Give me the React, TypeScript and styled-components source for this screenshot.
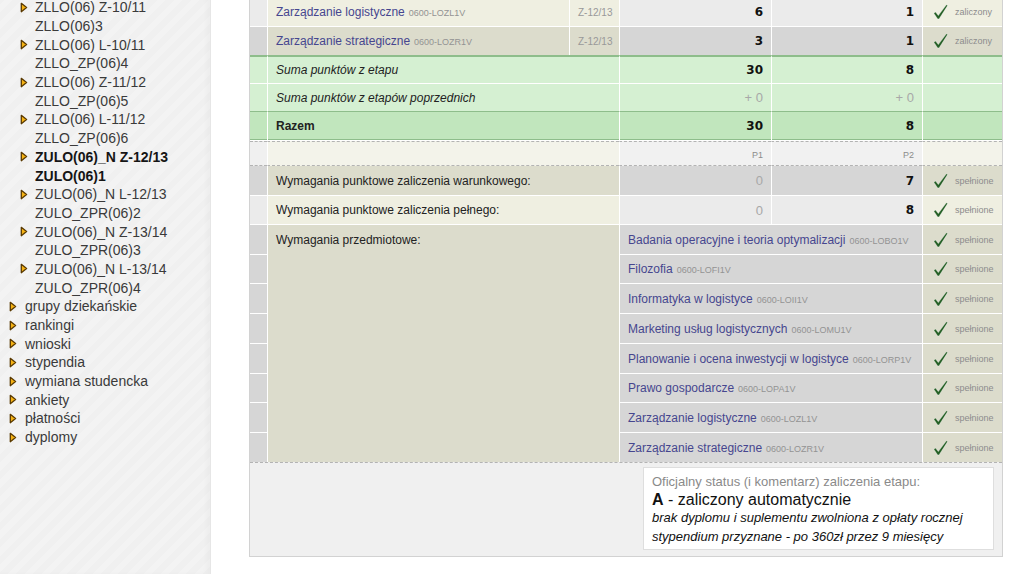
import React from "react"
import styled, { createGlobalStyle } from "styled-components"

const GlobalStyle = createGlobalStyle`
  html, body {
    margin: 0;
    padding: 0;
    background: #fff;
  }
  body {
    font-family: "Liberation Sans", Arial, sans-serif;
    overflow: hidden;
  }
`

const LIGHT = { side: "#ebebeb", name: "#efefe1", num: "#ebebeb", status: "#efefe1" }
const DARK = { side: "#d6d6d6", name: "#dcdccc", num: "#d6d6d6", status: "#dcdccc" }
const GREEN = "#d5f0d2"
const GREEN_DARK = "#c1e6bd"
const GREEN_LINE = "#8ebd8b"
const DASH = "1px dashed #b3b3b3"

const Page = styled.div`
  display: flex;
  height: 578px;
  margin-top: -4px;
`

const Sidebar = styled.nav`
  width: 211px;
  flex: none;
  box-sizing: border-box;
  padding-top: 2px;
  border-right: 1px solid #e6e6e6;
  background: repeating-linear-gradient(135deg, #f0f0f0 0 6px, #f3f3f3 6px 12px);
  box-shadow: inset -4px 0 5px rgba(0, 0, 0, 0.025);
`

const Item = styled.div<{ $nested?: boolean; $bold?: boolean }>`
  display: flex;
  align-items: center;
  height: 18.7px;
  padding-left: ${(p) => (p.$nested ? 20 : 9)}px;
  font-size: 14px;
  color: ${(p) => (p.$bold ? "#151515" : "#3a3a3a")};
  font-weight: ${(p) => (p.$bold ? "bold" : "normal")};
  white-space: nowrap;
`

const ArrowSlot = styled.span<{ $nested?: boolean }>`
  width: ${(p) => (p.$nested ? 15 : 16)}px;
  flex: none;
  display: flex;
  align-items: center;
`

const Main = styled.main`
  flex: 1;
  padding-left: 38px;
`

const Panel = styled.div`
  width: 752px;
  border: 1px solid #d2d2d2;
  background: #f0f0f0;
`

const Table = styled.table`
  width: 752px;
  border-collapse: separate;
  border-spacing: 0;
  table-layout: fixed;
`

const Td = styled.td<{
  $bg: string
  $h?: number
  $align?: "left" | "right" | "center"
  $first?: boolean
  $top?: string
  $bottom?: string
  $shadow?: string
}>`
  box-sizing: content-box;
  background: ${(p) => p.$bg};
  height: ${(p) => p.$h ?? 28}px;
  padding: 0 8px;
  border-top: ${(p) => p.$top ?? "1px solid #fff"};
  border-bottom: ${(p) => p.$bottom ?? "none"};
  border-left: ${(p) => (p.$first ? "none" : "1px solid #fff")};
  box-shadow: ${(p) => p.$shadow ?? "none"};
  text-align: ${(p) => p.$align ?? "left"};
  vertical-align: middle;
  font-size: 12px;
  color: #222;
  white-space: nowrap;
  overflow: hidden;
`

const TopTd = styled(Td)`
  vertical-align: top;
  padding-top: 8px;
`

const BottomTd = styled(Td)`
  padding: 4px 8px 6px 0;
  height: auto;
`

const CourseName = styled.span`
  color: #46468f;
  font-size: 12px;
`

const Code = styled.span`
  color: #939393;
  font-size: 9px;
  margin-left: 4px;
`

const Term = styled.span`
  color: #999;
  font-size: 10px;
`

const Points = styled.span<{ $muted?: boolean }>`
  font-family: ${(p) => (p.$muted ? '"Liberation Sans", Arial, sans-serif' : '"DejaVu Sans", Verdana, sans-serif')};
  font-weight: ${(p) => (p.$muted ? "normal" : "bold")};
  font-size: ${(p) => (p.$muted ? 13 : 12)}px;
  color: ${(p) => (p.$muted ? "#a8a8a8" : "#111")};
`

const Tiny = styled.span`
  color: #8c8c8c;
  font-size: 9px;
`

const StatusInner = styled.span`
  display: flex;
  align-items: center;
  gap: 7px;
  padding-left: 2px;
`

const BottomInner = styled.div`
  display: flex;
  justify-content: flex-end;
`

const StatusBox = styled.div`
  width: 333px;
  padding: 5px 8px 3px;
  background: #fff;
  border: 1px solid #dedede;
  white-space: normal;
`

const StatusLabel = styled.div`
  font-size: 13px;
  line-height: 18px;
  color: #8a8a8a;
`

const StatusValue = styled.div`
  font-size: 16px;
  line-height: 18px;
  color: #111;
  b {
    font-weight: bold;
  }
`

const StatusNote = styled.div`
  font-size: 13px;
  line-height: 18.5px;
  font-style: italic;
  color: #111;
`

const Arrow = () => (
  <svg width="8" height="11" viewBox="0 0 8 11">
    <path d="M1.3 1.3 L6.6 5.5 L1.3 9.7 Z" fill="#f5b214" stroke="#5a3a02" strokeWidth="1.3" strokeLinejoin="round" />
  </svg>
)

const Check = () => (
  <svg width="15" height="16" viewBox="0 0 15 16" style={{ flex: "none" }}>
    <path
      d="M0.8 9.2 L2.6 8.1 L5.3 11.6 L13.4 0.8 L14.6 1.6 L6 15 L4.7 15 Z"
      fill="#245f24"
      stroke="#fff"
      strokeOpacity="0.6"
      strokeWidth="0.6"
    />
  </svg>
)

const menu: { label: string; nested?: boolean; arrow?: boolean; bold?: boolean }[] = [
  { label: "ZLLO(06) Z-10/11", nested: true, arrow: true },
  { label: "ZLLO(06)3", nested: true },
  { label: "ZLLO(06) L-10/11", nested: true, arrow: true },
  { label: "ZLLO_ZP(06)4", nested: true },
  { label: "ZLLO(06) Z-11/12", nested: true, arrow: true },
  { label: "ZLLO_ZP(06)5", nested: true },
  { label: "ZLLO(06) L-11/12", nested: true, arrow: true },
  { label: "ZLLO_ZP(06)6", nested: true },
  { label: "ZULO(06)_N Z-12/13", nested: true, arrow: true, bold: true },
  { label: "ZULO(06)1", nested: true, bold: true },
  { label: "ZULO(06)_N L-12/13", nested: true, arrow: true },
  { label: "ZULO_ZPR(06)2", nested: true },
  { label: "ZULO(06)_N Z-13/14", nested: true, arrow: true },
  { label: "ZULO_ZPR(06)3", nested: true },
  { label: "ZULO(06)_N L-13/14", nested: true, arrow: true },
  { label: "ZULO_ZPR(06)4", nested: true },
  { label: "grupy dziekańskie", arrow: true },
  { label: "rankingi", arrow: true },
  { label: "wnioski", arrow: true },
  { label: "stypendia", arrow: true },
  { label: "wymiana studencka", arrow: true },
  { label: "ankiety", arrow: true },
  { label: "płatności", arrow: true },
  { label: "dyplomy", arrow: true },
]

const courses = [
  { name: "Zarządzanie logistyczne", code: "0600-LOZL1V", p1: 6, p2: 1, shade: LIGHT, h: 28 },
  { name: "Zarządzanie strategiczne", code: "0600-LOZR1V", p1: 3, p2: 1, shade: DARK, h: 28 },
]

const subjects = [
  { name: "Badania operacyjne i teoria optymalizacji", code: "0600-LOBO1V", h: 29 },
  { name: "Filozofia", code: "0600-LOFI1V", h: 28 },
  { name: "Informatyka w logistyce", code: "0600-LOII1V", h: 29 },
  { name: "Marketing usług logistycznych", code: "0600-LOMU1V", h: 29 },
  { name: "Planowanie i ocena inwestycji w logistyce", code: "0600-LORP1V", h: 29 },
  { name: "Prawo gospodarcze", code: "0600-LOPA1V", h: 28 },
  { name: "Zarządzanie logistyczne", code: "0600-LOZL1V", h: 29 },
  { name: "Zarządzanie strategiczne", code: "0600-LOZR1V", h: 29 },
]

const Status = ({ text }: { text: string }) => (
  <StatusInner>
    <Check />
    <Tiny>{text}</Tiny>
  </StatusInner>
)

const App = () => (
  <>
    <GlobalStyle />
    <Page>
      <Sidebar>
        {menu.map((m) => (
          <Item key={m.label} $nested={m.nested} $bold={m.bold}>
            <ArrowSlot $nested={m.nested}>{m.arrow && <Arrow />}</ArrowSlot>
            {m.label}
          </Item>
        ))}
      </Sidebar>

      <Main>
        <Panel>
          <Table>
            <colgroup>
              <col style={{ width: 17 }} />
              <col style={{ width: 302 }} />
              <col style={{ width: 50 }} />
              <col style={{ width: 152 }} />
              <col style={{ width: 151 }} />
              <col style={{ width: 80 }} />
            </colgroup>
            <tbody>
              {courses.map((c) => (
                <tr key={c.code}>
                  <Td $first $bg={c.shade.side} $h={c.h} />
                  <Td $bg={c.shade.name} $h={c.h}>
                    <CourseName>{c.name}</CourseName>
                    <Code>{c.code}</Code>
                  </Td>
                  <Td $bg={c.shade.name} $h={c.h} $align="center">
                    <Term>Z-12/13</Term>
                  </Td>
                  <Td $bg={c.shade.num} $h={c.h} $align="right">
                    <Points>{c.p1}</Points>
                  </Td>
                  <Td $bg={c.shade.num} $h={c.h} $align="right">
                    <Points>{c.p2}</Points>
                  </Td>
                  <Td $bg={c.shade.status} $h={c.h}>
                    <Status text="zaliczony" />
                  </Td>
                </tr>
              ))}

              <tr>
                <Td $first $bg={GREEN} $h={26} $top={`2px solid ${GREEN_LINE}`} />
                <Td colSpan={2} $bg={GREEN} $h={26} $top={`2px solid ${GREEN_LINE}`}>
                  <i>Suma punktów z etapu</i>
                </Td>
                <Td $bg={GREEN} $h={26} $align="right" $top={`2px solid ${GREEN_LINE}`}>
                  <Points>30</Points>
                </Td>
                <Td $bg={GREEN} $h={26} $align="right" $top={`2px solid ${GREEN_LINE}`}>
                  <Points>8</Points>
                </Td>
                <Td $bg={GREEN} $h={26} $top={`2px solid ${GREEN_LINE}`} />
              </tr>
              <tr>
                <Td $first $bg={GREEN} $h={27} />
                <Td colSpan={2} $bg={GREEN} $h={27}>
                  <i>Suma punktów z etapów poprzednich</i>
                </Td>
                <Td $bg={GREEN} $h={27} $align="right">
                  <Points $muted>+ 0</Points>
                </Td>
                <Td $bg={GREEN} $h={27} $align="right">
                  <Points $muted>+ 0</Points>
                </Td>
                <Td $bg={GREEN} $h={27} />
              </tr>
              <tr>
                {[0, 1, 2, 3, 4].map((i) => (
                  <Td
                    key={i}
                    $first={i === 0}
                    colSpan={i === 1 ? 2 : 1}
                    $bg={GREEN_DARK}
                    $h={28}
                    $align={i === 2 || i === 3 ? "right" : "left"}
                    $top={`1px solid ${GREEN_LINE}`}
                    $bottom="1px solid #fff"
                    $shadow={`inset 0 -1px 0 ${GREEN_LINE}`}
                  >
                    {i === 1 && <b>Razem</b>}
                    {i === 2 && <Points>30</Points>}
                    {i === 3 && <Points>8</Points>}
                  </Td>
                ))}
              </tr>

              <tr>
                <Td $first $bg="#f0f0f0" $h={23} $top={DASH} $bottom={DASH} />
                <Td colSpan={2} $bg="#f3f3ea" $h={23} $top={DASH} $bottom={DASH} />
                <Td $bg="#f1f1f1" $h={23} $align="right" $top={DASH} $bottom={DASH}>
                  <Tiny>P1</Tiny>
                </Td>
                <Td $bg="#f1f1f1" $h={23} $align="right" $top={DASH} $bottom={DASH}>
                  <Tiny>P2</Tiny>
                </Td>
                <Td $bg="#f3f3ea" $h={23} $top={DASH} $bottom={DASH} />
              </tr>

              <tr>
                <Td $first $bg={DARK.side} $h={29} $top="none" />
                <Td colSpan={2} $bg={DARK.name} $h={29} $top="none">
                  Wymagania punktowe zaliczenia warunkowego:
                </Td>
                <Td $bg={DARK.num} $h={29} $align="right" $top="none">
                  <Points $muted>0</Points>
                </Td>
                <Td $bg={DARK.num} $h={29} $align="right" $top="none">
                  <Points>7</Points>
                </Td>
                <Td $bg={DARK.status} $h={29} $top="none">
                  <Status text="spełnione" />
                </Td>
              </tr>
              <tr>
                <Td $first $bg={LIGHT.side} $h={28} />
                <Td colSpan={2} $bg={LIGHT.name} $h={28}>
                  Wymagania punktowe zaliczenia pełnego:
                </Td>
                <Td $bg={LIGHT.num} $h={28} $align="right">
                  <Points $muted>0</Points>
                </Td>
                <Td $bg={LIGHT.num} $h={28} $align="right">
                  <Points>8</Points>
                </Td>
                <Td $bg={LIGHT.status} $h={28}>
                  <Status text="spełnione" />
                </Td>
              </tr>

              {subjects.map((s, i) => (
                <tr key={s.name + s.code}>
                  <Td $first $bg={DARK.side} $h={s.h} />
                  {i === 0 && (
                    <TopTd colSpan={2} rowSpan={subjects.length} $bg={DARK.name}>
                      Wymagania przedmiotowe:
                    </TopTd>
                  )}
                  <Td colSpan={2} $bg={DARK.num} $h={s.h}>
                    <CourseName>{s.name}</CourseName>
                    <Code>{s.code}</Code>
                  </Td>
                  <Td $bg={DARK.status} $h={s.h}>
                    <Status text="spełnione" />
                  </Td>
                </tr>
              ))}

              <tr>
                <BottomTd $first colSpan={6} $bg="#f0f0f0" $top={DASH}>
                  <BottomInner>
                    <StatusBox>
                      <StatusLabel>Oficjalny status (i komentarz) zaliczenia etapu:</StatusLabel>
                      <StatusValue>
                        <b>A</b> - zaliczony automatycznie
                      </StatusValue>
                      <StatusNote>brak dyplomu i suplementu zwolniona z opłaty rocznej</StatusNote>
                      <StatusNote>stypendium przyznane - po 360zł przez 9 miesięcy</StatusNote>
                    </StatusBox>
                  </BottomInner>
                </BottomTd>
              </tr>
            </tbody>
          </Table>
        </Panel>
      </Main>
    </Page>
  </>
)

export default App
